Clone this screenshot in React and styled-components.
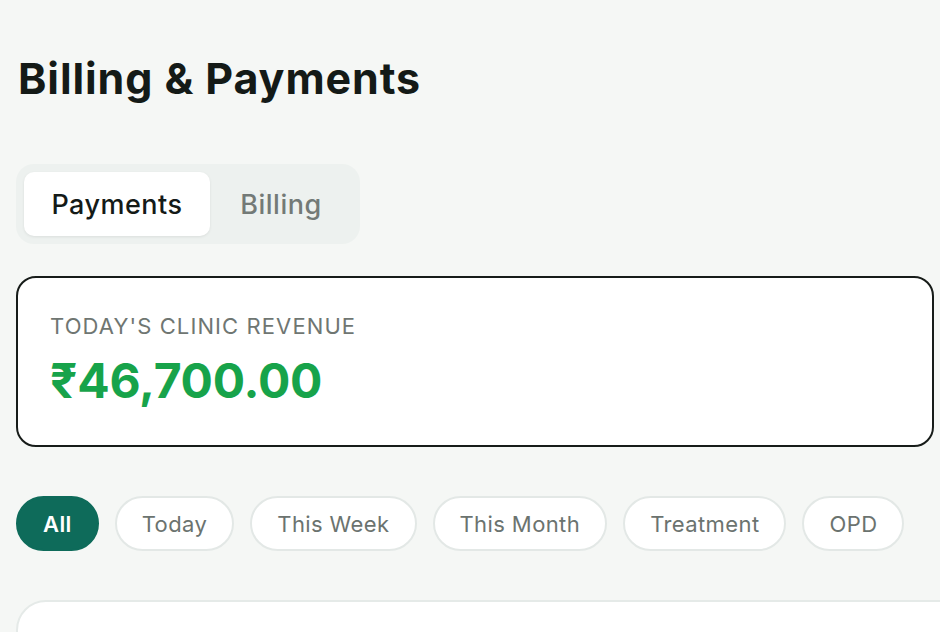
import React from "react";
import styled, { createGlobalStyle } from "styled-components";

const GlobalStyle = createGlobalStyle`
  html, body {
    margin: 0;
    padding: 0;
    background: #f5f7f5;
    overflow: hidden;
  }
  body {
    font-family: Inter, "Noto Sans", sans-serif;
  }
`;

const Page = styled.div`
  padding: 50px 6px 0 16px;
  width: 940px;
  box-sizing: border-box;
`;

const Title = styled.h1`
  margin: 0 0 0 2px;
  font-size: 43px;
  font-weight: 700;
  letter-spacing: 0.9px;
  line-height: 56px;
  color: #141a17;
`;

const TabBar = styled.div`
  display: inline-flex;
  margin-top: 58px;
  padding: 8px;
  background: #edf1ef;
  border-radius: 18px;
`;

const Tab = styled.button`
  border: none;
  width: ${(p) => (p.active ? "186px" : "142px")};
  height: 64px;
  border-radius: 10px;
  font-family: inherit;
  font-size: 27px;
  font-weight: 500;
  letter-spacing: 0.5px;
  color: ${(p) => (p.active ? "#141a17" : "#737a77")};
  background: ${(p) => (p.active ? "#ffffff" : "transparent")};
  box-shadow: ${(p) => (p.active ? "0 1px 3px rgba(0,0,0,0.08)" : "none")};
  cursor: pointer;
`;

const RevenueCard = styled.div`
  margin-top: 32px;
  height: 171px;
  box-sizing: border-box;
  border: 2px solid #171c19;
  border-radius: 20px;
  background: #fff;
  padding: 35px 32px;
  display: flex;
  flex-direction: column;
  gap: 18px;
`;

const Label = styled.div`
  font-size: 22px;
  font-weight: 400;
  color: #6f7672;
  letter-spacing: 1.1px;
`;

const Amount = styled.div`
  font-size: 48px;
  font-weight: 700;
  color: #17a34a;
  letter-spacing: -0.2px;
  line-height: 1;
`;

const Chips = styled.div`
  display: flex;
  gap: 16px;
  margin-top: 49px;
`;

const Chip = styled.button`
  height: 55px;
  padding: 0 25px;
  border-radius: 28px;
  font-family: inherit;
  font-size: 22px;
  letter-spacing: 0.4px;
  font-weight: ${(p) => (p.active ? 600 : 400)};
  color: ${(p) => (p.active ? "#ffffff" : "#6b736f")};
  background: ${(p) => (p.active ? "#0e6b5a" : "#ffffff")};
  border: 2px solid ${(p) => (p.active ? "#0e6b5a" : "#e3e8e6")};
  cursor: pointer;
`;

const ListCard = styled.div`
  margin-top: 49px;
  width: 980px;
  height: 200px;
  background: #fff;
  border: 2px solid #e5eae8;
  border-radius: 30px;
`;

const filters = ["All", "Today", "This Week", "This Month", "Treatment", "OPD"];

export default function App() {
  return (
    <Page>
      <GlobalStyle />
      <Title>Billing &amp; Payments</Title>
      <TabBar>
        <Tab active>Payments</Tab>
        <Tab>Billing</Tab>
      </TabBar>
      <RevenueCard>
        <Label>TODAY'S CLINIC REVENUE</Label>
        <Amount>₹46,700.00</Amount>
      </RevenueCard>
      <Chips>
        {filters.map((f, i) => (
          <Chip key={f} active={i === 0}>
            {f}
          </Chip>
        ))}
      </Chips>
      <ListCard />
    </Page>
  );
}
